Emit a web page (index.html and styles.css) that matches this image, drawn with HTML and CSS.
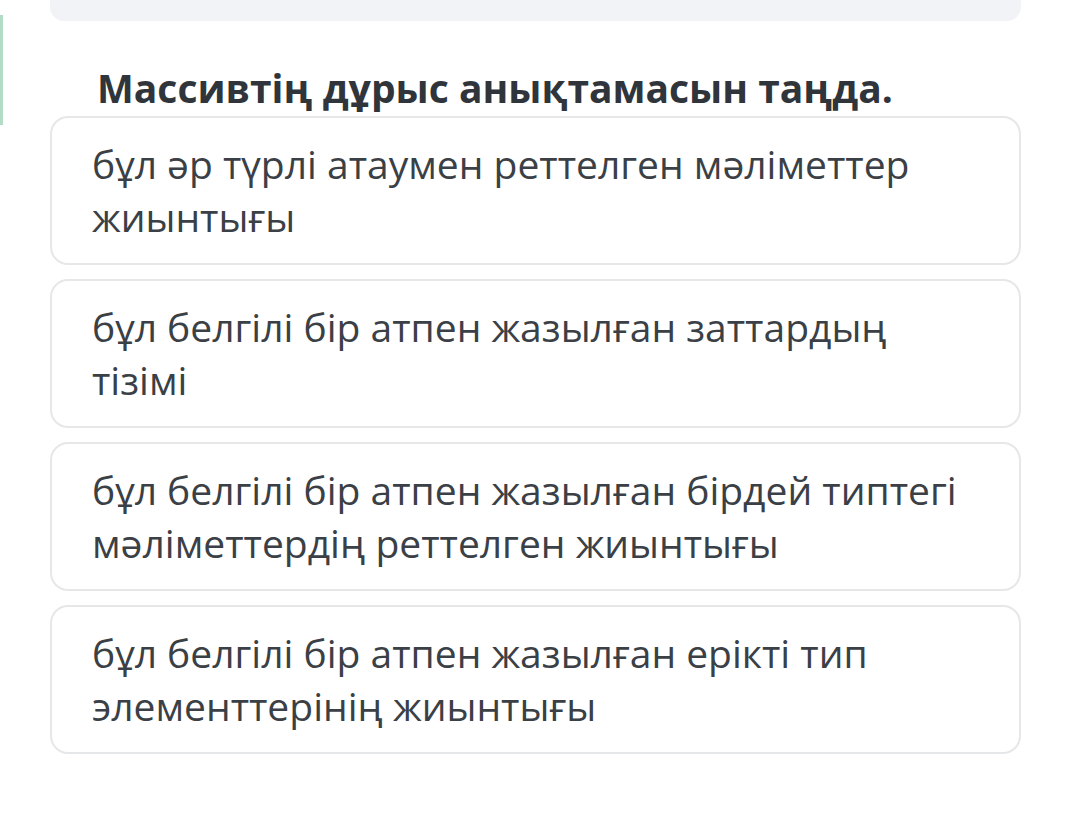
FILE: index.html
```html
<!DOCTYPE html>
<html lang="kk">
<head>
<meta charset="utf-8">
<title>Тест</title>
<link rel="stylesheet" href="styles.css">
</head>
<body>
<div class="edge"></div>
<main class="page">
  <div class="top-box"></div>
  <h1 class="question">Массивтің дұрыс анықтамасын таңда.</h1>
  <div class="options">
    <div class="option">бұл әр түрлі атаумен реттелген мәліметтер жиынтығы</div>
    <div class="option">бұл белгілі бір атпен жазылған заттардың тізімі</div>
    <div class="option">бұл белгілі бір атпен жазылған бірдей типтегі мәліметтердің реттелген жиынтығы</div>
    <div class="option">бұл белгілі бір атпен жазылған ерікті тип элементтерінің жиынтығы</div>
  </div>
</main>
</body>
</html>
```
FILE: styles.css
```css
html, body {
  margin: 0;
  padding: 0;
  background: #ffffff;
}
body {
  font-family: "Open Sans", "Noto Sans", sans-serif;
  position: relative;
  width: 1069px;
  height: 832px;
  overflow: hidden;
}
.edge {
  position: absolute;
  left: 0;
  top: 15px;
  width: 3px;
  height: 110px;
  background: #b3dcc6;
}
.page {
  margin-left: 50px;
  width: 971px;
}
.top-box {
  height: 21px;
  background: #f2f3f6;
  border-radius: 0 0 14px 14px;
}
.question {
  margin: 41px 0 3px 0;
  padding-left: 47px;
  font-size: 39px;
  line-height: 51px;
  font-weight: 700;
  color: #30353c;
}
.options {
  display: flex;
  flex-direction: column;
  gap: 14px;
}
.option {
  border: 2px solid #e6e7e9;
  border-radius: 18px;
  padding: 19px 40px 20px 40px;
  font-size: 39px;
  line-height: 53px;
  color: #3b3f46;
  height: 106px;
}
```
